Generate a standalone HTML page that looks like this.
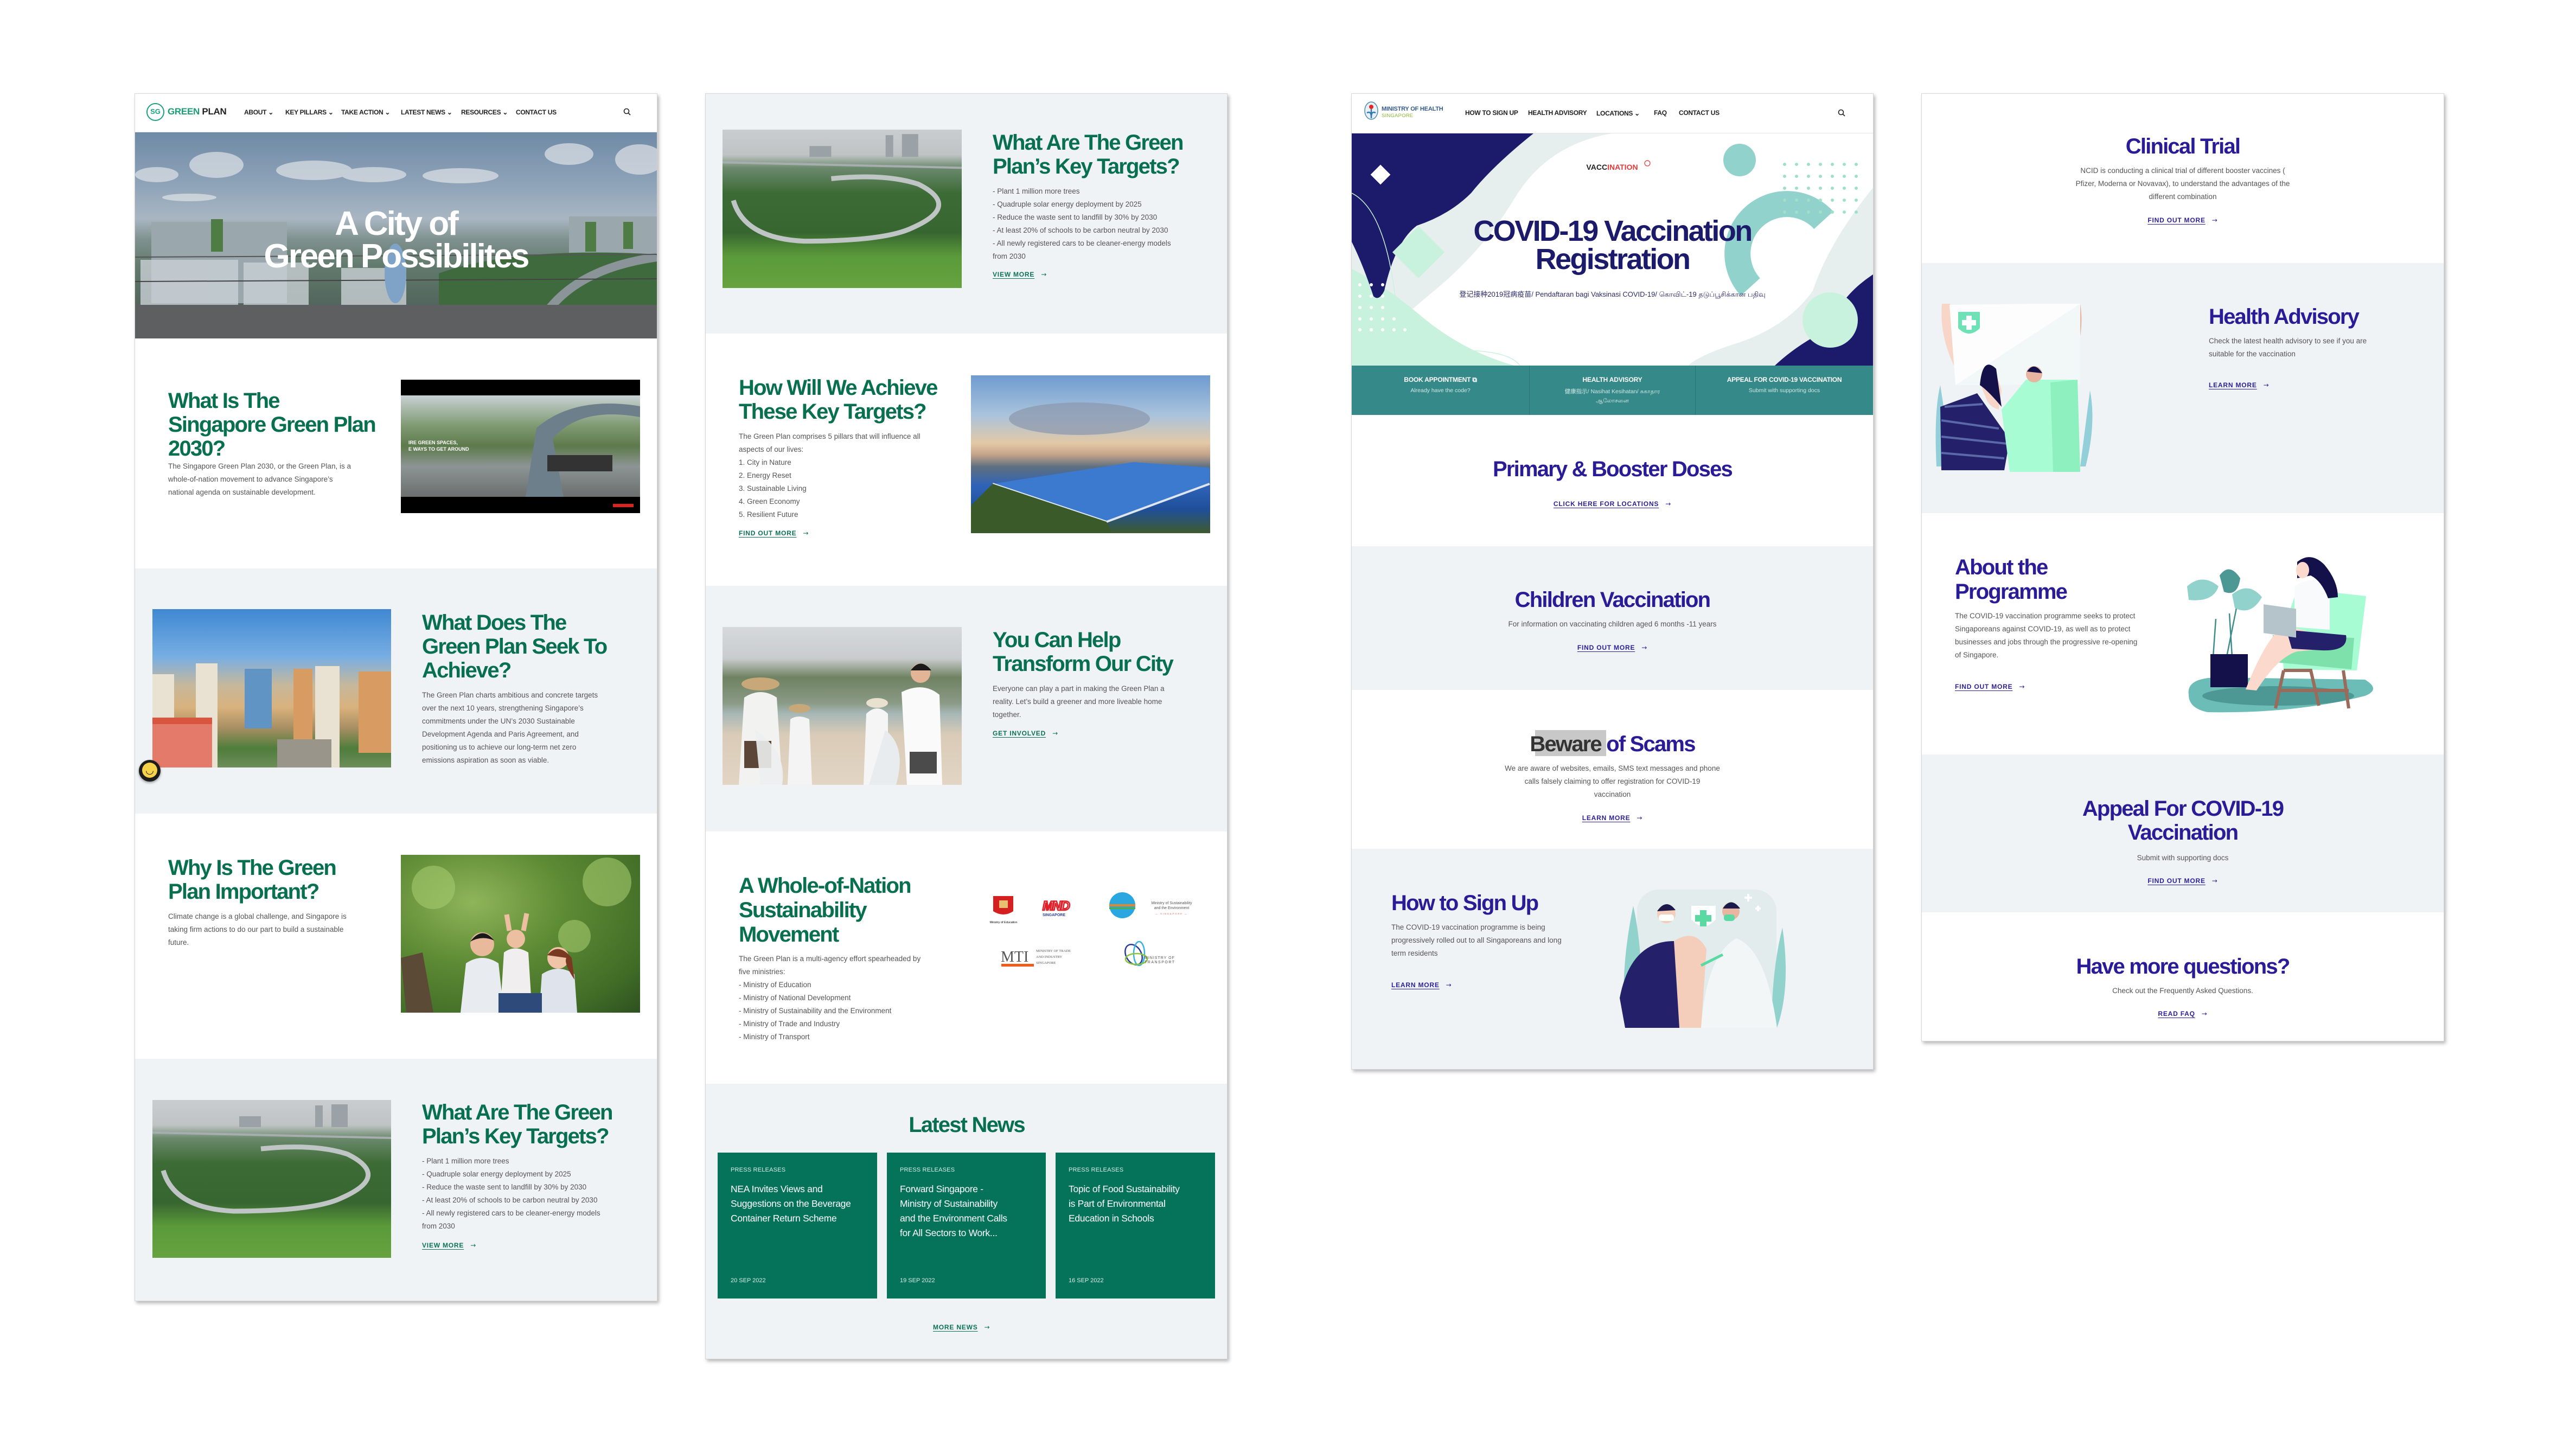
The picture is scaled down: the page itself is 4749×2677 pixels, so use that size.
<!DOCTYPE html>
<html><head><meta charset="utf-8">
<style>
*{margin:0;padding:0;box-sizing:border-box}
body{width:4749px;height:2677px;background:#fff;position:relative;overflow:hidden;font-family:"Liberation Sans","Noto Sans CJK SC",sans-serif}
.a{position:absolute}
.panel{position:absolute;background:#fff;box-shadow:3px 4px 6px rgba(0,0,0,.28);border:1px solid #d6d6d6;overflow:hidden}
.g{background:#eff3f6}
.hg{position:absolute;color:#08704f;font-weight:700;font-size:40px;line-height:44px;letter-spacing:-1.8px;white-space:nowrap}
.hp{position:absolute;color:#2a1b96;font-weight:700;font-size:40px;line-height:45px;letter-spacing:-1.8px;white-space:nowrap}
.p{position:absolute;color:#555;font-size:13.5px;line-height:24px;white-space:nowrap}
.c{text-align:center}
.lk{position:absolute;font-size:12px;font-weight:700;letter-spacing:.8px;line-height:16px;white-space:nowrap;text-decoration:underline;text-underline-offset:3px}
.lk span{text-decoration:none;display:inline-block;margin-left:12px;font-family:"DejaVu Sans",sans-serif;font-weight:400}
.lg{color:#0a7156}.lp{color:#2b1f98}
.nav{position:absolute;font-size:12px;font-weight:700;color:#222;letter-spacing:-.3px;white-space:nowrap;line-height:14px}
.card{position:absolute;background:#04735a;color:#fff}
.card .l{position:absolute;left:24px;top:26px;font-size:11px;color:#d8ece6;letter-spacing:.2px}
.card .t{position:absolute;left:24px;top:54px;font-size:17.5px;line-height:27px;white-space:nowrap;letter-spacing:-.3px}
.card .d{position:absolute;left:24px;top:230px;font-size:11px;color:#d8ece6}
</style></head><body>

<!-- ============ PANEL 1 ============ -->
<div class="panel" style="left:248px;top:172px;width:964px;height:2227px"></div>
<div class="a" style="left:249px;top:173px;width:962px;height:71px;background:#fff;border-bottom:1px solid #e4e4e4"></div>
<div class="a" style="left:270px;top:190px;width:33px;height:33px;border:2.5px solid #1aa37a;border-radius:50%;color:#1aa37a;font-size:13px;font-weight:700;text-align:center;line-height:28px">SG</div>
<div class="a" style="left:309px;top:196px;font-size:17px;font-weight:700;white-space:nowrap;letter-spacing:-.3px"><span style="color:#1a9e74">GREEN</span> <span style="color:#222">PLAN</span></div>
<div class="nav" style="left:450px;top:200px">ABOUT ⌄</div>
<div class="nav" style="left:526px;top:200px">KEY PILLARS ⌄</div>
<div class="nav" style="left:629px;top:200px">TAKE ACTION ⌄</div>
<div class="nav" style="left:739px;top:200px">LATEST NEWS ⌄</div>
<div class="nav" style="left:850px;top:200px">RESOURCES ⌄</div>
<div class="nav" style="left:951px;top:200px">CONTACT US</div>
<svg class="a" style="left:1149px;top:199px" width="14" height="14" viewBox="0 0 14 14"><circle cx="6" cy="6" r="4.5" fill="none" stroke="#222" stroke-width="1.6"/><path d="M9.5 9.5L13 13" stroke="#222" stroke-width="1.6"/></svg>
<!-- hero -->
<div class="a" style="left:249px;top:244px;width:962px;height:380px;background:linear-gradient(180deg,#6f8aa6 0%,#8ea3b8 25%,#a9b6c2 42%,#7f918e 52%,#627a6d 65%,#55695f 80%,#4b5652 100%)"></div>
<svg class="a" style="left:249px;top:244px" width="962" height="380" viewBox="0 0 962 380">
<g fill="#dfe3e7" opacity=".7"><ellipse cx="150" cy="60" rx="50" ry="24"/><ellipse cx="40" cy="78" rx="40" ry="14"/><ellipse cx="330" cy="70" rx="70" ry="18"/><ellipse cx="440" cy="78" rx="60" ry="14"/><ellipse cx="600" cy="80" rx="70" ry="14"/><ellipse cx="800" cy="40" rx="45" ry="20"/><ellipse cx="930" cy="50" rx="45" ry="28"/><ellipse cx="100" cy="120" rx="50" ry="7"/></g>
<g fill="#9aa8ae"><rect x="30" y="165" width="250" height="150"/><rect x="800" y="155" width="162" height="160"/></g>
<g fill="#c9d0d4" opacity=".8"><rect x="10" y="235" width="180" height="120"/><rect x="200" y="240" width="120" height="110"/><rect x="380" y="250" width="120" height="100"/></g>
<g fill="#4f7b45"><rect x="140" y="160" width="22" height="60"/><rect x="830" y="165" width="20" height="55"/><rect x="900" y="165" width="18" height="50"/></g>
<path d="M560 260 Q700 210 962 225 L962 320 L560 320Z" fill="#3f6a3e"/>
<path d="M760 330 Q820 250 962 230" stroke="#8a9499" stroke-width="16" fill="none"/>
<path d="M0 230 L962 225" stroke="#555" stroke-width="2"/><path d="M0 275 L962 270" stroke="#444" stroke-width="2"/>
<rect x="0" y="318" width="962" height="62" fill="#5d5f60"/>
<ellipse cx="480" cy="260" rx="20" ry="55" fill="#7ea3c7"/>
</svg>
<div class="a c" style="left:249px;top:383px;width:962px;color:#fff;font-size:62px;font-weight:700;line-height:60px;letter-spacing:-3px;white-space:nowrap">A City of<br>Green Possibilites</div>
<!-- sec1 -->
<div class="hg" style="left:310px;top:717px">What Is The<br>Singapore Green Plan<br>2030?</div>
<div class="p" style="left:310px;top:848px">The Singapore Green Plan 2030, or the Green Plan, is a<br>whole-of-nation movement to advance Singapore’s<br>national agenda on sustainable development.</div>
<div class="a" style="left:739px;top:700px;width:441px;height:246px;background:#000"></div>
<div class="a" style="left:739px;top:729px;width:441px;height:187px;background:linear-gradient(180deg,#c8d1d4 0%,#7f9a72 30%,#5d7a4c 50%,#8d9494 70%,#6b6f6e 100%)"></div>
<svg class="a" style="left:739px;top:729px" width="441" height="187" viewBox="0 0 441 187"><path d="M230 187 L250 60 Q320 0 441 20 L441 40 Q330 20 280 80 L300 187Z" fill="#6d7f8a"/><rect x="270" y="110" width="120" height="30" fill="#333"/><text x="14" y="90" font-family="Liberation Sans" font-size="9" font-weight="700" fill="#fff">IRE GREEN SPACES,</text><text x="14" y="102" font-family="Liberation Sans" font-size="9" font-weight="700" fill="#fff">E WAYS TO GET AROUND</text></svg>
<div class="a" style="left:1130px;top:929px;width:38px;height:6px;background:#d22"></div>
<!-- sec2 -->
<div class="a g" style="left:249px;top:1048px;width:962px;height:452px"></div>
<div class="a" style="left:281px;top:1123px;width:440px;height:292px;background:linear-gradient(180deg,#3f88d2 0%,#77aee3 30%,#c6b89c 48%,#d9b27d 62%,#a88f63 75%,#4e7d3b 88%,#6d8d5a 100%)"></div>
<svg class="a" style="left:281px;top:1123px" width="440" height="292" viewBox="0 0 440 292"><g fill="#e9e2d2"><rect x="0" y="120" width="40" height="172"/><rect x="80" y="100" width="40" height="192"/><rect x="300" y="105" width="45" height="187"/></g><g fill="#d89c62"><rect x="260" y="110" width="35" height="150"/><rect x="380" y="115" width="60" height="150"/></g><g fill="#5f94c4"><rect x="170" y="110" width="50" height="110"/></g><rect x="0" y="210" width="110" height="82" fill="#e47b6a"/><rect x="0" y="200" width="110" height="12" fill="#d9553f"/><rect x="230" y="240" width="100" height="52" fill="#9a958a"/></svg>
<div class="a" style="left:256px;top:1401px;width:40px;height:40px;border-radius:50%;background:#1c1c1c;box-shadow:0 2px 5px rgba(0,0,0,.4)"></div>
<div class="a" style="left:262px;top:1406px;width:28px;height:28px;border-radius:50%;background:#f6d24a;font-size:18px;line-height:28px;text-align:center;color:#222">◡</div>
<div class="hg" style="left:778px;top:1126px">What Does The<br>Green Plan Seek To<br>Achieve?</div>
<div class="p" style="left:778px;top:1270px">The Green Plan charts ambitious and concrete targets<br>over the next 10 years, strengthening Singapore’s<br>commitments under the UN’s 2030 Sustainable<br>Development Agenda and Paris Agreement, and<br>positioning us to achieve our long-term net zero<br>emissions aspiration as soon as viable.</div>
<!-- sec3 -->
<div class="hg" style="left:310px;top:1578px">Why Is The Green<br>Plan Important?</div>
<div class="p" style="left:310px;top:1678px">Climate change is a global challenge, and Singapore is<br>taking firm actions to do our part to build a sustainable<br>future.</div>
<div class="a" style="left:739px;top:1576px;width:441px;height:291px;background:radial-gradient(ellipse at 30% 30%,#8fb55a 0%,#5d8a34 40%,#3f6b26 80%,#2e5020 100%)"></div>
<svg class="a" style="left:739px;top:1576px" width="441" height="291" viewBox="0 0 441 291"><g fill="#a5c96e" opacity=".6"><circle cx="60" cy="60" r="40"/><circle cx="380" cy="50" r="45"/><circle cx="320" cy="150" r="30"/></g><path d="M0 190 L40 180 L60 291 L10 291Z" fill="#5b4a36"/><path d="M110 291 L120 200 Q150 180 180 200 L190 291Z" fill="#e8ebf0"/><circle cx="150" cy="165" r="22" fill="#e8b99b"/><path d="M128 160 Q150 130 172 158 Q150 148 128 160" fill="#1a1a1a"/><path d="M185 260 L190 180 Q210 165 235 180 L240 260Z" fill="#f1eef0"/><circle cx="212" cy="155" r="17" fill="#ebbf9f"/><path d="M200 140 L195 110 M226 140 L232 108" stroke="#ebbf9f" stroke-width="9"/><path d="M255 291 L260 220 Q290 200 320 220 L325 291Z" fill="#dfe3eb"/><circle cx="290" cy="190" r="20" fill="#f0c4a6"/><path d="M270 185 Q290 160 315 190 L320 230 Q300 200 305 190Z" fill="#7a3a22"/><rect x="180" y="255" width="80" height="36" fill="#2d4a7a"/></svg>
<!-- sec4 -->
<div class="a g" style="left:249px;top:1952px;width:962px;height:446px"></div>
<div class="a" style="left:281px;top:2028px;width:440px;height:291px;background:linear-gradient(180deg,#c9cdd0 0%,#bfc3c3 16%,#6c8a6e 24%,#3d6b35 40%,#376630 65%,#5b9a3a 80%,#66a33f 100%)"></div>
<svg class="a" style="left:281px;top:2028px" width="440" height="291" viewBox="0 0 440 291"><path d="M20 130 Q40 200 150 205 Q300 205 350 180 Q440 140 360 100 Q300 80 200 90" fill="none" stroke="#bfc5c4" stroke-width="9"/><g fill="#9aa2a8"><rect x="300" y="10" width="14" height="40"/><rect x="330" y="8" width="30" height="42"/><rect x="160" y="30" width="40" height="20"/></g><path d="M0 60 L440 70" stroke="#a8aeb0" stroke-width="4"/></svg>
<div class="hg" style="left:778px;top:2029px">What Are The Green<br>Plan’s Key Targets?</div>
<div class="p" style="left:778px;top:2129px">- Plant 1 million more trees<br>- Quadruple solar energy deployment by 2025<br>- Reduce the waste sent to landfill by 30% by 2030<br>- At least 20% of schools to be carbon neutral by 2030<br>- All newly registered cars to be cleaner-energy models<br>from 2030</div>
<div class="lk lg" style="left:778px;top:2288px">VIEW MORE<span>→</span></div>

<!-- ============ PANEL 2 ============ -->
<div class="panel" style="left:1300px;top:172px;width:963px;height:2334px"></div>
<div class="a g" style="left:1301px;top:173px;width:961px;height:442px"></div>
<div class="a" style="left:1332px;top:239px;width:441px;height:292px;background:linear-gradient(180deg,#c9cdd0 0%,#bfc3c3 16%,#6c8a6e 24%,#3d6b35 40%,#376630 65%,#5b9a3a 80%,#66a33f 100%)"></div>
<svg class="a" style="left:1332px;top:239px" width="441" height="292" viewBox="0 0 440 291"><path d="M20 130 Q40 200 150 205 Q300 205 350 180 Q440 140 360 100 Q300 80 200 90" fill="none" stroke="#bfc5c4" stroke-width="9"/><g fill="#9aa2a8"><rect x="300" y="10" width="14" height="40"/><rect x="330" y="8" width="30" height="42"/><rect x="160" y="30" width="40" height="20"/></g><path d="M0 60 L440 70" stroke="#a8aeb0" stroke-width="4"/></svg>
<div class="hg" style="left:1830px;top:241px">What Are The Green<br>Plan’s Key Targets?</div>
<div class="p" style="left:1830px;top:341px">- Plant 1 million more trees<br>- Quadruple solar energy deployment by 2025<br>- Reduce the waste sent to landfill by 30% by 2030<br>- At least 20% of schools to be carbon neutral by 2030<br>- All newly registered cars to be cleaner-energy models<br>from 2030</div>
<div class="lk lg" style="left:1830px;top:498px">VIEW MORE<span>→</span></div>
<!-- B -->
<div class="hg" style="left:1362px;top:693px">How Will We Achieve<br>These Key Targets?</div>
<div class="p" style="left:1362px;top:793px">The Green Plan comprises 5 pillars that will influence all<br>aspects of our lives:<br>1. City in Nature<br>2. Energy Reset<br>3. Sustainable Living<br>4. Green Economy<br>5. Resilient Future</div>
<div class="lk lg" style="left:1362px;top:975px">FIND OUT MORE<span>→</span></div>
<div class="a" style="left:1790px;top:692px;width:441px;height:291px;background:linear-gradient(180deg,#6f9bd0 0%,#a9c3dc 25%,#e3c9a6 43%,#c7a58a 50%,#5e6f80 58%,#2f63b8 70%,#1f4f9a 85%,#3e5a2e 100%)"></div>
<svg class="a" style="left:1790px;top:692px" width="441" height="291" viewBox="0 0 441 291"><ellipse cx="200" cy="80" rx="130" ry="30" fill="#8a97ad" opacity=".7"/><path d="M40 200 L300 160 L440 170 L440 200 L250 270 Z" fill="#3c7ad0"/><path d="M40 200 L250 270 L440 200" stroke="#dfe6ee" stroke-width="4" fill="none"/><path d="M0 240 L40 200 L250 270 L260 291 L0 291Z" fill="#3b5a2a"/></svg>
<!-- C -->
<div class="a g" style="left:1301px;top:1080px;width:961px;height:453px"></div>
<div class="a" style="left:1332px;top:1156px;width:441px;height:291px;background:linear-gradient(180deg,#d6d9dc 0%,#c9cccd 20%,#6f8261 32%,#8a9a86 48%,#a7b7b7 55%,#d9cbb7 68%,#e2d5c4 100%)"></div>
<svg class="a" style="left:1332px;top:1156px" width="441" height="291" viewBox="0 0 441 291"><path d="M30 291 L40 130 Q70 110 100 130 L110 291Z" fill="#f2f2f0"/><rect x="40" y="210" width="50" height="50" fill="#5b4638"/><ellipse cx="70" cy="105" rx="35" ry="12" fill="#c8a878"/><path d="M120 291 L125 170 Q140 160 160 170 L165 291Z" fill="#f4f4f4"/><ellipse cx="142" cy="150" rx="20" ry="8" fill="#c8a878"/><path d="M60 190 Q120 230 110 291 L70 291Z" fill="#eceef0" opacity=".9"/><path d="M260 291 L265 160 Q285 140 305 160 L305 291Z" fill="#f5f5f5"/><ellipse cx="285" cy="140" rx="20" ry="9" fill="#e8e1d0"/><path d="M340 291 L330 120 Q370 100 400 125 L405 291Z" fill="#fafafa"/><circle cx="365" cy="85" r="18" fill="#e3b596"/><path d="M347 80 Q365 55 385 80" fill="#1a1a1a"/><rect x="345" y="230" width="50" height="40" fill="#4b4b4b"/><path d="M300 190 Q340 220 320 291 L270 291Z" fill="#e9ecee"/></svg>
<div class="hg" style="left:1830px;top:1158px">You Can Help<br>Transform Our City</div>
<div class="p" style="left:1830px;top:1258px">Everyone can play a part in making the Green Plan a<br>reality. Let’s build a greener and more liveable home<br>together.</div>
<div class="lk lg" style="left:1830px;top:1344px">GET INVOLVED<span>→</span></div>
<!-- D -->
<div class="hg" style="left:1362px;top:1611px;line-height:45px">A Whole-of-Nation<br>Sustainability<br>Movement</div>
<div class="p" style="left:1362px;top:1756px">The Green Plan is a multi-agency effort spearheaded by<br>five ministries:<br>- Ministry of Education<br>- Ministry of National Development<br>- Ministry of Sustainability and the Environment<br>- Ministry of Trade and Industry<br>- Ministry of Transport</div>
<svg class="a" style="left:1800px;top:1640px" width="440" height="160" viewBox="0 0 440 160">
<path d="M31 12 H68 V40 Q50 52 31 40Z" fill="#d42020"/><rect x="42" y="20" width="16" height="14" fill="#e8c070"/><text x="50" y="62" font-size="5.5" text-anchor="middle" font-family="Liberation Sans">Ministry of Education</text>
<text x="122" y="38" font-size="24" font-style="italic" font-weight="700" fill="none" stroke="#e0202a" stroke-width="2.5" font-family="Liberation Sans" letter-spacing="-2">MND</text><text x="122" y="49" font-size="7" font-weight="700" fill="#2a3c9a" font-family="Liberation Sans">SINGAPORE</text>
<circle cx="269" cy="29" r="24" fill="#2aa6e0"/><rect x="245" y="27" width="48" height="4" fill="#e8842a"/><rect x="245" y="33" width="48" height="3" fill="#4bb04a"/><text x="360" y="27" font-size="7" text-anchor="middle" fill="#555" font-family="Liberation Sans">Ministry of Sustainability</text><text x="360" y="36" font-size="7" text-anchor="middle" fill="#555" font-family="Liberation Sans">and the Environment</text><text x="360" y="46" font-size="4" text-anchor="middle" fill="#d33" font-family="Liberation Sans" letter-spacing="2">— SINGAPORE —</text>
<text x="45" y="133" font-size="28" fill="#555" font-family="Liberation Serif">MTI</text><rect x="46" y="137" width="60" height="5" fill="#f05a1a"/><text x="110" y="115" font-size="6.5" fill="#555" font-family="Liberation Serif">MINISTRY OF TRADE</text><text x="110" y="126" font-size="6.5" fill="#555" font-family="Liberation Serif">AND INDUSTRY</text><text x="110" y="137" font-size="6.5" fill="#555" font-family="Liberation Serif">SINGAPORE</text>
<ellipse cx="290" cy="120" rx="14" ry="20" fill="none" stroke="#2a3c9a" stroke-width="2.5" transform="rotate(-30 290 120)"/><ellipse cx="300" cy="118" rx="10" ry="22" fill="none" stroke="#3ab0e0" stroke-width="2.5"/><ellipse cx="295" cy="128" rx="20" ry="10" fill="none" stroke="#8ac43a" stroke-width="2.5"/><text x="310" y="128" font-size="7" fill="#555" letter-spacing="1" font-family="Liberation Sans">MINISTRY OF</text><text x="310" y="136" font-size="7" fill="#555" letter-spacing="1.5" font-family="Liberation Sans">TRANSPORT</text>
</svg>
<!-- E -->
<div class="a g" style="left:1301px;top:1998px;width:961px;height:507px"></div>
<div class="hg c" style="left:1582px;top:2052px;width:400px">Latest News</div>
<div class="card" style="left:1323px;top:2125px;width:294px;height:269px"><div class="l">PRESS RELEASES</div><div class="t">NEA Invites Views and<br>Suggestions on the Beverage<br>Container Return Scheme</div><div class="d">20 SEP 2022</div></div>
<div class="card" style="left:1635px;top:2125px;width:293px;height:269px"><div class="l">PRESS RELEASES</div><div class="t">Forward Singapore -<br>Ministry of Sustainability<br>and the Environment Calls<br>for All Sectors to Work...</div><div class="d">19 SEP 2022</div></div>
<div class="card" style="left:1946px;top:2125px;width:294px;height:269px"><div class="l">PRESS RELEASES</div><div class="t">Topic of Food Sustainability<br>is Part of Environmental<br>Education in Schools</div><div class="d">16 SEP 2022</div></div>
<div class="lk lg" style="left:1720px;top:2439px">MORE NEWS<span>→</span></div>

<!-- ============ PANEL 3 ============ -->
<div class="panel" style="left:2491px;top:172px;width:963px;height:1800px"></div>
<div class="a" style="left:2492px;top:173px;width:961px;height:73px;border-bottom:1px solid #e4e4e4"></div>
<svg class="a" style="left:2514px;top:186px" width="28" height="36" viewBox="0 0 28 36"><ellipse cx="14" cy="18" rx="12" ry="16" fill="#e8f0f6" stroke="#4a8ab8" stroke-width="1.5"/><circle cx="14" cy="11" r="4" fill="#e02a2a"/><path d="M14 15 V32 M6 22 Q14 18 14 30 M22 22 Q14 18 14 30" stroke="#2e7ab0" stroke-width="2.5" fill="none"/></svg>
<div class="a" style="left:2547px;top:195px;font-size:11px;font-weight:700;color:#355a8e;letter-spacing:-.2px;white-space:nowrap;line-height:12px">MINISTRY OF HEALTH</div>
<div class="a" style="left:2547px;top:209px;font-size:9.5px;color:#8ab83a;letter-spacing:.2px;line-height:10px">SINGAPORE</div>
<div class="nav" style="left:2701px;top:201px">HOW TO SIGN UP</div>
<div class="nav" style="left:2817px;top:201px">HEALTH ADVISORY</div>
<div class="nav" style="left:2943px;top:202px">LOCATIONS ⌄</div>
<div class="nav" style="left:3049px;top:201px">FAQ</div>
<div class="nav" style="left:3095px;top:201px">CONTACT US</div>
<svg class="a" style="left:3388px;top:201px" width="14" height="14" viewBox="0 0 14 14"><circle cx="6" cy="6" r="4.5" fill="none" stroke="#222" stroke-width="1.6"/><path d="M9.5 9.5L13 13" stroke="#222" stroke-width="1.6"/></svg>
<svg class="a" style="left:2492px;top:246px" width="961" height="428" viewBox="0 0 961 428">
<rect width="961" height="428" fill="#fff"/>
<path d="M0 0 H480 Q360 20 300 120 Q240 220 140 300 Q60 370 0 400Z" fill="#e6efee"/>
<path d="M0 250 Q60 280 120 330 Q200 400 300 428 H0Z" fill="#c9f2de"/>
<path d="M0 0 H335 Q260 60 220 110 Q180 150 120 170 Q80 200 60 290 Q50 310 40 300 Q20 240 0 200Z" fill="#1c1a6a"/>
<path d="M0 110 Q60 140 80 300 Q110 400 200 400 Q290 400 310 428" stroke="#c9f2de" stroke-width="1.5" fill="none"/>
<path d="M961 100 Q880 200 850 290 Q800 360 700 390 Q640 410 620 428 H961Z" fill="#e6efee"/>
<path d="M961 260 Q900 300 880 360 Q820 390 780 428 H961Z" fill="#1c1a6a"/>
<circle cx="715" cy="49" r="30" fill="#92d2cd"/>
<path d="M735 283 A85 85 0 1 1 870 160" stroke="#92d2cd" stroke-width="48" fill="none"/>
<circle cx="882" cy="344" r="51" fill="#c9f2de"/>
<rect x="40" y="63" width="26" height="26" fill="#fff" transform="rotate(45 53 76)"/>
<rect x="89" y="185" width="68" height="68" fill="#c9f2de" transform="rotate(45 123 219)"/>
<g fill="#9fe0c8">
<circle cx="798" cy="57" r="3"/><circle cx="820" cy="57" r="3"/><circle cx="842" cy="57" r="3"/><circle cx="864" cy="57" r="3"/><circle cx="886" cy="57" r="3"/><circle cx="908" cy="57" r="3"/><circle cx="930" cy="57" r="3"/>
<circle cx="798" cy="79" r="3"/><circle cx="820" cy="79" r="3"/><circle cx="842" cy="79" r="3"/><circle cx="864" cy="79" r="3"/><circle cx="886" cy="79" r="3"/><circle cx="908" cy="79" r="3"/><circle cx="930" cy="79" r="3"/>
<circle cx="798" cy="101" r="3"/><circle cx="820" cy="101" r="3"/><circle cx="842" cy="101" r="3"/><circle cx="864" cy="101" r="3"/><circle cx="886" cy="101" r="3"/><circle cx="908" cy="101" r="3"/><circle cx="930" cy="101" r="3"/>
<circle cx="798" cy="123" r="3"/><circle cx="820" cy="123" r="3"/><circle cx="842" cy="123" r="3"/><circle cx="864" cy="123" r="3"/><circle cx="886" cy="123" r="3"/><circle cx="908" cy="123" r="3"/><circle cx="930" cy="123" r="3"/>
<circle cx="798" cy="145" r="3"/><circle cx="820" cy="145" r="3"/><circle cx="842" cy="145" r="3"/><circle cx="864" cy="145" r="3"/><circle cx="886" cy="145" r="3"/><circle cx="908" cy="145" r="3"/><circle cx="930" cy="145" r="3"/>
</g>
<g fill="#fff"><circle cx="15" cy="279" r="3"/><circle cx="36" cy="279" r="3"/><circle cx="57" cy="279" r="3"/><circle cx="15" cy="300" r="3"/><circle cx="36" cy="300" r="3"/><circle cx="57" cy="300" r="3"/><circle cx="15" cy="321" r="3"/><circle cx="36" cy="321" r="3"/><circle cx="57" cy="321" r="3"/><circle cx="15" cy="342" r="3"/><circle cx="36" cy="342" r="3"/><circle cx="57" cy="342" r="3"/><circle cx="78" cy="342" r="3"/><circle cx="15" cy="362" r="3"/><circle cx="36" cy="362" r="3"/><circle cx="57" cy="362" r="3"/><circle cx="78" cy="362" r="3"/><circle cx="98" cy="362" r="3"/></g>
<text x="480" y="67" text-anchor="middle" font-family="Liberation Sans" font-size="14" font-weight="700"><tspan fill="#222">VACC</tspan><tspan fill="#e23a3a">INATION</tspan></text>
<circle cx="545" cy="55" r="5" fill="none" stroke="#e23a3a" stroke-width="1.2"/>
</svg>
<div class="a c" style="left:2492px;top:400px;width:961px;color:#1c1a6a;font-size:54px;font-weight:700;line-height:52px;letter-spacing:-2.6px;white-space:nowrap">COVID-19 Vaccination<br>Registration</div>
<div class="a c" style="left:2492px;top:532px;width:961px;color:#2a2a6a;font-size:13px;white-space:nowrap;font-family:'Liberation Sans','Noto Sans CJK SC',sans-serif">登记接种2019冠病疫苗/ Pendaftaran bagi Vaksinasi COVID-19/ கொவிட்-19 தடுப்பூசிக்கான பதிவு</div>
<div class="a" style="left:2492px;top:674px;width:961px;height:91px;background:#358a89"></div>
<div class="a" style="left:2819px;top:674px;width:1px;height:91px;background:#2a7473"></div>
<div class="a" style="left:3125px;top:674px;width:1px;height:91px;background:#2a7473"></div>
<div class="a c" style="left:2492px;top:693px;width:327px;color:#fff;font-size:12px;font-weight:700;letter-spacing:-.2px">BOOK APPOINTMENT ⧉</div>
<div class="a c" style="left:2492px;top:714px;width:327px;color:#cfe6e5;font-size:10.5px">Already have the code?</div>
<div class="a c" style="left:2820px;top:693px;width:305px;color:#fff;font-size:12px;font-weight:700;letter-spacing:-.2px">HEALTH ADVISORY</div>
<div class="a c" style="left:2820px;top:714px;width:305px;color:#cfe6e5;font-size:10.5px;line-height:17px">健康指示/ Nasihat Kesihatan/ சுகாதார<br>ஆலோசனை</div>
<div class="a c" style="left:3126px;top:693px;width:327px;color:#fff;font-size:12px;font-weight:700;letter-spacing:-.3px">APPEAL FOR COVID-19 VACCINATION</div>
<div class="a c" style="left:3126px;top:714px;width:327px;color:#cfe6e5;font-size:10.5px">Submit with supporting docs</div>
<!-- primary -->
<div class="hp c" style="left:2492px;top:843px;width:961px">Primary &amp; Booster Doses</div>
<div class="lk lp c" style="left:2492px;top:921px;width:961px">CLICK HERE FOR LOCATIONS<span>→</span></div>
<!-- children -->
<div class="a g" style="left:2492px;top:1007px;width:961px;height:265px"></div>
<div class="hp c" style="left:2492px;top:1084px;width:961px">Children Vaccination</div>
<div class="p c" style="left:2492px;top:1139px;width:961px">For information on vaccinating children aged 6 months -11 years</div>
<div class="lk lp c" style="left:2492px;top:1186px;width:961px">FIND OUT MORE<span>→</span></div>
<!-- scams -->
<div class="a" style="left:2830px;top:1346px;width:131px;height:48px;background:#c8c8c8"></div>
<div class="hp c" style="left:2492px;top:1350px;width:961px"><span style="color:#333">Beware</span> of Scams</div>
<div class="p c" style="left:2492px;top:1405px;width:961px">We are aware of websites, emails, SMS text messages and phone<br>calls falsely claiming to offer registration for COVID-19<br>vaccination</div>
<div class="lk lp c" style="left:2492px;top:1500px;width:961px">LEARN MORE<span>→</span></div>
<!-- sign up -->
<div class="a g" style="left:2492px;top:1565px;width:961px;height:406px"></div>
<div class="hp" style="left:2565px;top:1643px">How to Sign Up</div>
<div class="p" style="left:2565px;top:1698px">The COVID-19 vaccination programme is being<br>progressively rolled out to all Singaporeans and long<br>term residents</div>
<div class="lk lp" style="left:2565px;top:1808px">LEARN MORE<span>→</span></div>
<svg class="a" style="left:2986px;top:1640px" width="316" height="255" viewBox="0 0 316 255">
<rect x="32" y="0" width="257" height="255" rx="40" fill="#e2ecec"/>
<path d="M10 255 Q0 150 25 30 Q45 120 40 255Z" fill="#92d2cd"/><path d="M290 255 Q316 180 300 70 Q280 150 280 255Z" fill="#92d2cd"/>
<path d="M0 200 Q20 95 100 95 L130 90 Q150 150 150 255 L10 255Z" fill="#24206a"/>
<path d="M100 95 Q140 70 160 110 L150 255 L110 255Z" fill="#f4cdbb"/>
<circle cx="86" cy="45" r="17" fill="#f4cdbb"/><path d="M69 40 Q86 15 103 38Z" fill="#1c1a4a"/><rect x="72" y="46" width="28" height="12" rx="5" fill="#fff"/>
<path d="M132 30 H177 V55 Q155 80 132 55Z" fill="#fff"/><rect x="148" y="38" width="12" height="30" fill="#5bd9a2"/><rect x="139" y="47" width="30" height="12" fill="#5bd9a2"/>
<path d="M150 255 Q160 120 215 90 Q270 110 290 255Z" fill="#f3f6f7"/>
<circle cx="205" cy="40" r="16" fill="#e8b5a0"/><path d="M190 35 Q205 12 222 35Z" fill="#1c1a4a"/><rect x="192" y="46" width="20" height="12" rx="5" fill="#5bd9a2"/>
<path d="M150 140 L190 120" stroke="#5bd9a2" stroke-width="5"/>
<path d="M230 15 h14 M237 8 v14 M250 35 h10 M255 30 v10" stroke="#fff" stroke-width="4"/>
</svg>

<!-- ============ PANEL 4 ============ -->
<div class="panel" style="left:3542px;top:172px;width:964px;height:1748px"></div>
<div class="hp c" style="left:3543px;top:248px;width:962px">Clinical Trial</div>
<div class="p c" style="left:3543px;top:303px;width:962px">NCID is conducting a clinical trial of different booster vaccines (<br>Pfizer, Moderna or Novavax), to understand the advantages of the<br>different combination</div>
<div class="lk lp c" style="left:3543px;top:398px;width:962px">FIND OUT MORE<span>→</span></div>
<div class="a g" style="left:3543px;top:485px;width:962px;height:461px"></div>
<svg class="a" style="left:3565px;top:560px" width="300" height="310" viewBox="0 0 300 310">
<path d="M5 300 Q0 200 12 150 L35 300Z" fill="#92cfd8"/><path d="M280 300 Q300 220 288 160 L270 300Z" fill="#92cfd8"/>
<path d="M40 120 Q10 60 15 0 L30 0 Q35 60 70 110Z" fill="#f7d6c8"/><path d="M250 120 Q280 60 270 0 L255 0 Q255 60 220 110Z" fill="#e8b5a0"/>
<path d="M29 2 L270 -1 L270 148 L40 150Z" fill="#fdfdfd"/><path d="M270 0 L270 148 L40 150Z" fill="#f2f8f8"/>
<path d="M45 15 H85 V45 Q65 65 45 45Z" fill="#6de2b6"/><rect x="60" y="22" width="10" height="26" fill="#fff"/><rect x="52" y="30" width="26" height="10" fill="#fff"/>
<path d="M12 190 L80 165 L140 250 L130 307 L14 307Z" fill="#24206a"/>
<g stroke="#5a6aa8" stroke-width="4"><path d="M14 215 L120 230 M14 245 L135 258 M14 275 L130 285 M20 190 L90 185"/></g>
<path d="M95 170 Q80 140 95 125 Q115 120 125 160 L120 195 Q100 190 95 170Z" fill="#f7d6c8"/><path d="M85 150 Q90 95 115 120 L125 190 Q100 160 85 150" fill="#14104a"/>
<path d="M125 195 L170 140 L260 140 L270 310 L140 310Z" fill="#a8fcd4"/><path d="M215 145 L265 140 L270 310 L220 310Z" fill="#8ef0be"/>
<circle cx="185" cy="130" r="15" fill="#e8b5a0"/><path d="M172 125 Q185 105 200 128Z" fill="#14104a"/>
</svg>
<div class="hp" style="left:4072px;top:562px">Health Advisory</div>
<div class="p" style="left:4072px;top:617px">Check the latest health advisory to see if you are<br>suitable for the vaccination</div>
<div class="lk lp" style="left:4072px;top:702px">LEARN MORE<span>→</span></div>
<!-- about -->
<div class="hp" style="left:3604px;top:1024px">About the<br>Programme</div>
<div class="p" style="left:3604px;top:1124px">The COVID-19 vaccination programme seeks to protect<br>Singaporeans against COVID-19, as well as to protect<br>businesses and jobs through the progressive re-opening<br>of Singapore.</div>
<div class="lk lp" style="left:3604px;top:1258px">FIND OUT MORE<span>→</span></div>
<svg class="a" style="left:4030px;top:1021px" width="355" height="295" viewBox="0 0 355 295">
<path d="M5 260 Q0 228 60 228 L330 232 Q360 250 330 262 Q200 295 40 292 Q5 285 5 260Z" fill="#6cbcb8"/>
<ellipse cx="170" cy="262" rx="140" ry="18" fill="#4d9894"/>
<path d="M55 120 L50 190 M80 110 L85 190 M95 90 L75 190" stroke="#3d8e8a" stroke-width="2.5"/>
<path d="M2 60 Q30 35 60 60 Q50 90 5 85Z" fill="#92d2cd"/><path d="M62 40 Q80 15 100 45 Q95 80 70 70Z" fill="#4d9894"/><path d="M85 75 Q115 50 140 80 Q120 115 90 100Z" fill="#92d2cd"/>
<rect x="45" y="185" width="69" height="61" fill="#14104a"/>
<path d="M200 80 L260 70 L332 78 L315 215 L180 213 L175 150Z" fill="#a8fcd4"/><path d="M160 150 L310 155 L305 213 L165 200Z" fill="#7ee0aa"/>
<path d="M110 250 Q150 150 180 135 Q230 135 260 175 L205 180 Q170 190 130 252Z" fill="#fbd9cc"/>
<path d="M185 140 L295 150 Q300 180 250 178 L195 175Z" fill="#24206a"/>
<path d="M200 60 Q230 40 265 55 L265 140 L200 135Z" fill="#f8fafb"/>
<rect x="143" y="73" width="60" height="53" fill="#b5c4cb" transform="skewY(8)"/>
<path d="M205 15 Q230 -5 255 20 Q280 50 280 80 L262 82 Q250 50 230 40 L205 45Z" fill="#14104a"/><ellipse cx="215" cy="30" rx="12" ry="15" fill="#fbd9cc"/>
<path d="M180 215 L230 215 L245 280 M290 215 L300 285 M180 215 L165 285 M170 252 L300 252" stroke="#9a6a5a" stroke-width="6" fill="none"/>
</svg>
<!-- appeal -->
<div class="a g" style="left:3543px;top:1391px;width:962px;height:291px"></div>
<div class="hp c" style="left:3543px;top:1469px;width:962px;line-height:44px">Appeal For COVID-19<br>Vaccination</div>
<div class="p c" style="left:3543px;top:1570px;width:962px">Submit with supporting docs</div>
<div class="lk lp c" style="left:3543px;top:1616px;width:962px">FIND OUT MORE<span>→</span></div>
<div class="hp c" style="left:3543px;top:1760px;width:962px">Have more questions?</div>
<div class="p c" style="left:3543px;top:1815px;width:962px">Check out the Frequently Asked Questions.</div>
<div class="lk lp c" style="left:3543px;top:1861px;width:962px">READ FAQ<span>→</span></div>
</body></html>
